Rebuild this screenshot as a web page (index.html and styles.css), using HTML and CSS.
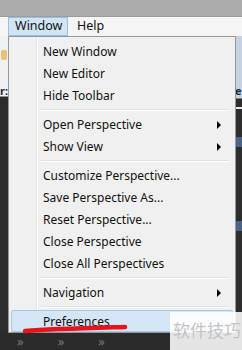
FILE: index.html
```html
<!DOCTYPE html>
<html lang="en">
<head>
    <meta charset="UTF-8">
    <meta name="viewport" content="width=device-width, initial-scale=1.0">
    <title>Window Menu</title>
    <link rel="stylesheet" href="styles.css">
</head>
<body>
    <div class="titlebar"></div>

    <div class="menubar">
        <span class="menubar-item active">Window</span>
        <span class="menubar-item">Help</span>
    </div>

    <div class="workspace">
        <div class="side side-left">
            <div class="tool-icon"></div>
            <div class="tab-label">r:</div>
        </div>
        <div class="middle"></div>
        <div class="side side-right">
            <div class="tab-label">e</div>
            <div class="bit bit-line"></div>
            <div class="bit bit-blue"></div>
            <div class="bit bit-blue bit-low"></div>
        </div>

        <div class="dropdown">
            <div class="item">New Window</div>
            <div class="item">New Editor</div>
            <div class="item">Hide Toolbar</div>
            <div class="separator"></div>
            <div class="item has-sub">Open Perspective</div>
            <div class="item has-sub">Show View</div>
            <div class="separator"></div>
            <div class="item">Customize Perspective...</div>
            <div class="item">Save Perspective As...</div>
            <div class="item">Reset Perspective...</div>
            <div class="item">Close Perspective</div>
            <div class="item">Close All Perspectives</div>
            <div class="separator"></div>
            <div class="item has-sub">Navigation</div>
            <div class="separator"></div>
            <div class="item selected">Preferences</div>
        </div>

        <!-- red pen stroke under Preferences -->
        <svg class="pen-mark" width="110" height="12" viewBox="0 0 110 12">
            <path d="M4 8 C 30 6, 70 5, 104 4" stroke="#e8141b" stroke-width="4.5" fill="none" stroke-linecap="round"/>
        </svg>
    </div>

    <div class="statusbar">
        <span>»</span>
        <span>»</span>
        <span>»</span>
    </div>

    <div class="watermark">软件技巧</div>
</body>
</html>
```

FILE: styles.css
```css
* {
    margin: 0;
    padding: 0;
    box-sizing: border-box;
}

body {
    width: 242px;
    height: 350px;
    overflow: hidden;
    position: relative;
    font-family: 'Noto Sans', 'Open Sans', sans-serif;
    font-size: 12px;
    color: #111;
    background-color: #2b2b2b;
}

.titlebar {
    height: 17px;
    background-color: #acacac;
    border-bottom: 1px solid #9c9c9c;
}

.menubar {
    height: 19px;
    background-color: #f5f5f5;
    display: flex;
    align-items: stretch;
    padding-left: 8px;
    gap: 2px;
    font-size: 12.5px;
}

.menubar-item {
    display: flex;
    align-items: center;
    padding: 0 6px;
    border: 1px solid transparent;
    line-height: 1;
}

.menubar-item.active {
    background-color: #d1e4f6;
    border-color: #9fbedd;
    width: 60px;
}

.workspace {
    position: relative;
    height: 296px;
    display: flex;
}

.side {
    width: 8px;
    position: relative;
    background-color: #2d2d2d;
}

.side-left {
    background: linear-gradient(#eef1f4 0, #eef1f4 60px, #2d2d2d 61px);
}

.side-right {
    width: 7px;
    background: linear-gradient(#c6d2e2 0, #c6d2e2 62px, #2d2d2d 63px);
}

.middle {
    flex: 1;
    background-color: #f0f0f0;
}

.tool-icon {
    position: absolute;
    left: 1px;
    top: 14px;
    width: 6px;
    height: 10px;
    background-color: #e6c27a;
    border-radius: 2px;
}

.tab-label {
    position: absolute;
    top: 47px;
    left: 0;
    font-size: 11px;
    font-weight: bold;
    color: #1a2a40;
}

.bit {
    position: absolute;
    left: 1px;
    width: 6px;
}

.bit-line {
    top: 71px;
    height: 2px;
    background-color: #e8e8e8;
}

.bit-blue {
    top: 101px;
    height: 10px;
    background-color: #4b6486;
}

.bit-low {
    top: 185px;
}

.dropdown {
    position: absolute;
    left: 8px;
    top: 0;
    width: 228px;
    height: 297px;
    background-color: #f0f0f0;
    border: 1px solid #979797;
    padding: 3px 2px 1px;
    background-image: linear-gradient(90deg, transparent 27px, #e2e3e3 27px, #e2e3e3 28px, #ffffff 28px, #ffffff 29px, transparent 29px);
}

.item {
    height: 22px;
    display: flex;
    align-items: center;
    padding-left: 31px;
    position: relative;
    border: 1px solid transparent;
}

.item.has-sub::after {
    content: "";
    position: absolute;
    right: 11px;
    top: 7px;
    border-left: 4px solid #000;
    border-top: 4px solid transparent;
    border-bottom: 4px solid transparent;
}

.item.selected {
    background-color: #d5e6f6;
    border-color: #a9c7e6;
    border-radius: 2px;
}

.separator {
    height: 7px;
    margin-left: 30px;
    margin-right: 4px;
    background-image: linear-gradient(transparent 3px, #e0e0e0 3px, #e0e0e0 4px, #ffffff 4px, #ffffff 5px, transparent 5px);
}

.pen-mark {
    position: absolute;
    left: 21px;
    top: 287px;
}

.statusbar {
    height: 18px;
    display: flex;
    gap: 34px;
    padding-left: 17px;
    color: #7a7a7a;
    font-size: 13px;
    line-height: 18px;
}

.watermark {
    position: absolute;
    left: 170px;
    top: 312px;
    width: 72px;
    height: 38px;
    padding: 5px 0 0 3px;
    background-color: rgba(255, 255, 255, 0.88);
    color: #c4c4c4;
    font-family: 'Noto Sans CJK SC', sans-serif;
    font-size: 17px;
}
```
